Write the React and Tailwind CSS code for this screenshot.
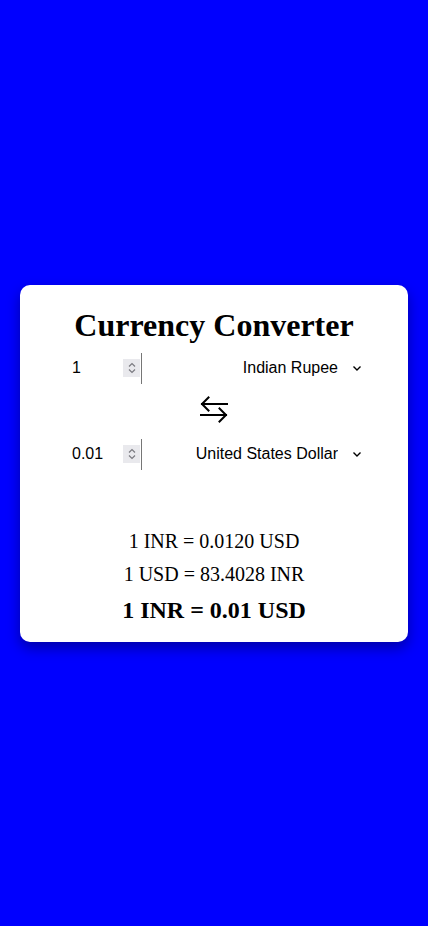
import React, { useState } from 'react';

const rates = { INR: { name: 'Indian Rupee' }, USD: { name: 'United States Dollar' } };

const SwapIcon = () => (
  <svg width="30" height="30" viewBox="0 0 30 30" fill="none" stroke="black" strokeWidth="2" strokeLinecap="square" strokeLinejoin="miter">
    <path d="M3 9h25M9.5 2.5L3 9l6.5 6.5" />
    <path d="M2 20h25M20.5 13.5L27 20l-6.5 6.5" />
  </svg>
);

const Spinner = () => (
  <div className="w-[17px] h-[18px] bg-[#e9e9ed] flex flex-col items-center justify-center gap-[2px] ml-auto">
    <svg width="8" height="5" viewBox="0 0 8 5" fill="none" stroke="#7a7a80" strokeWidth="1.2">
      <path d="M1 4.5L4 1.5l3 3" />
    </svg>
    <svg width="8" height="5" viewBox="0 0 8 5" fill="none" stroke="#7a7a80" strokeWidth="1.2">
      <path d="M1 0.5L4 3.5l3-3" />
    </svg>
  </div>
);

const Row = ({ value, currency }) => (
  <div className="flex items-center justify-between pl-[42px] pr-[47px]" style={{ fontFamily: '"Liberation Sans", Arial, sans-serif' }}>
    <div className="flex items-center w-[80px] h-[31px] border-r border-[#767676] pr-[1px]">
      <input
        type="text"
        defaultValue={value}
        className="w-[51px] min-w-0 pl-[10px] text-[16px] outline-none bg-transparent"
      />
      <Spinner />
    </div>
    <div className="flex items-center">
      <select
        defaultValue={currency}
        className="appearance-none h-[30px] text-[16px] bg-white outline-none text-right pr-[15px]"
      >
        {Object.entries(rates).map(([code, r]) => (
          <option key={code} value={code}>{r.name}</option>
        ))}
      </select>
      <svg width="8" height="5" viewBox="0 0 8 5" fill="none" stroke="black" strokeWidth="1.4">
        <path d="M0.5 0.5L4 4l3.5-3.5" />
      </svg>
    </div>
  </div>
);

export default function App() {
  const [from] = useState('INR');
  return (
    <div className="min-h-[926px] bg-[#0000ff] flex items-center justify-center px-[20px]">
      <div className="w-full bg-white rounded-[10px] shadow-[0_6px_14px_rgba(0,0,0,0.35)] pt-[20px] pb-[13px] font-['Liberation_Serif',serif] text-black">
        <h1 className="text-[32px] font-bold text-center leading-[40px]">Currency Converter</h1>
        <div className="mt-[8px]">
          <Row value="1" currency={from} />
        </div>
        <div className="flex justify-center mt-[11px] mb-[14px]">
          <SwapIcon />
        </div>
        <Row value="0.01" currency="USD" />
        <div className="mt-[55px] text-center">
          <p className="text-[20px] leading-[33px]">1 INR = 0.0120 USD</p>
          <p className="text-[20px] leading-[33px]">1 USD = 83.4028 INR</p>
          <p className="text-[24px] font-bold leading-[38px]">1 INR = 0.01 USD</p>
        </div>
      </div>
    </div>
  );
}
